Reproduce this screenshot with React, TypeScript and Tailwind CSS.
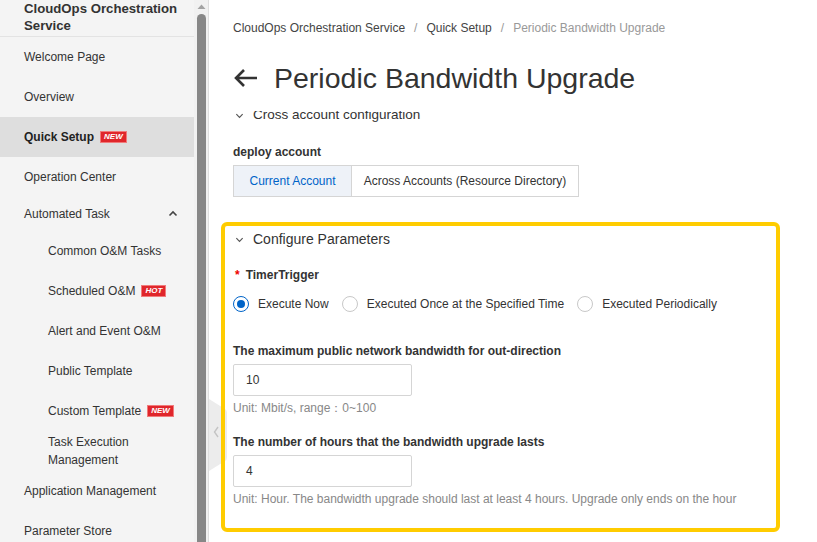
import type { FC, ReactNode } from "react";

const Badge: FC<{ children: ReactNode }> = ({ children }) => (
  <span className="ml-[6px] inline-flex h-[12px] items-center border border-[#f07b7b] bg-[#e0262b] px-[3px] text-[8px] font-bold italic leading-none text-white">
    {children}
  </span>
);

const NavItem: FC<{
  label: string;
  sub?: boolean;
  active?: boolean;
  badge?: string;
}> = ({ label, sub, active, badge }) => (
  <div
    className={`flex h-[40px] shrink-0 items-center ${sub ? "pl-[48px]" : "pl-[24px]"} pr-[12px] ${
      active ? "bg-[#dedede] font-bold text-[#222]" : "text-[#333]"
    }`}
  >
    <span>{label}</span>
    {badge && <Badge>{badge}</Badge>}
  </div>
);

const Sidebar = () => (
  <aside className="flex w-[194px] shrink-0 flex-col bg-[#f4f4f4] text-[12px]">
    <div className="shrink-0 border-b border-[#e3e3e3] pb-[2px] pl-[24px] pr-[10px] text-[13.2px] font-bold leading-[17px] text-[#333]">
      CloudOps Orchestration Service
    </div>
    <NavItem label="Welcome Page" />
    <NavItem label="Overview" />
    <NavItem label="Quick Setup" active badge="NEW" />
    <NavItem label="Operation Center" />
    <div className="flex h-[34px] shrink-0 items-center justify-between pl-[24px] pr-[16px] text-[#333]">
      <span>Automated Task</span>
      <svg width="10" height="10" viewBox="0 0 10 10">
        <path d="M1.5 6.5 L5 3 L8.5 6.5" fill="none" stroke="#444" strokeWidth="1.6" />
      </svg>
    </div>
    <NavItem label="Common O&M Tasks" sub />
    <NavItem label="Scheduled O&M" sub badge="HOT" />
    <NavItem label="Alert and Event O&M" sub />
    <NavItem label="Public Template" sub />
    <NavItem label="Custom Template" sub badge="NEW" />
    <div className="flex h-[40px] shrink-0 flex-col justify-center pl-[48px] pr-[12px] leading-[18px] text-[#333]">
      <span>Task Execution</span>
      <span>Management</span>
    </div>
    <NavItem label="Application Management" />
    <NavItem label="Parameter Store" />
  </aside>
);

const Scrollbar = () => (
  <div className="flex w-[15px] shrink-0 flex-col items-center border-r border-[#dedede] bg-[#f1f1f1]">
    <svg width="9" height="8" viewBox="0 0 9 8" className="mt-[3px]">
      <path d="M0.5 6 L4.5 1.5 L8.5 6 Z" fill="#a3a3a3" />
    </svg>
    <div className="mt-[3px] w-[9px] flex-1 rounded-t-[5px] bg-[#878787]" />
  </div>
);

const Radio: FC<{ label: string; checked?: boolean }> = ({ label, checked }) => (
  <label className="flex items-center gap-[9px]">
    <span
      className={`flex h-[16px] w-[16px] items-center justify-center rounded-full border ${
        checked ? "border-[1.5px] border-[#0064c8]" : "border-[#c8c8c8]"
      } bg-white`}
    >
      {checked && <span className="h-[8px] w-[8px] rounded-full bg-[#0064c8]" />}
    </span>
    <span className="text-[#333]">{label}</span>
  </label>
);

const Field: FC<{ label: string; value: string; help: string; className?: string }> = ({
  label,
  value,
  help,
  className,
}) => (
  <div className={className}>
    <div className="text-[12px] font-bold leading-[18px] text-[#333]">{label}</div>
    <div className="mt-[4px] flex h-[32px] w-[179px] items-center rounded-[2px] border border-[#d5d5d5] px-[12px] text-[12px] text-[#333]">
      {value}
    </div>
    <div className="mt-[3px] text-[12px] leading-[18px] text-[#888]">{help}</div>
  </div>
);

const Chevron = () => (
  <svg width="9" height="9" viewBox="0 0 10 10" className="shrink-0">
    <path d="M1.5 3.5 L5 7 L8.5 3.5" fill="none" stroke="#555" strokeWidth="1.3" />
  </svg>
);

export default function App() {
  return (
    <div className="relative flex h-[542px] w-[817px] overflow-hidden bg-white font-['Liberation_Sans',Arial,sans-serif]">
      <Sidebar />
      <Scrollbar />

      {/* collapse handle */}
      <svg
        width="18"
        height="72"
        viewBox="0 0 18 72"
        className="absolute left-[209px] top-[399px]"
      >
        <path d="M0 0 L16 10 Q18 11 18 14 L18 58 Q18 61 16 62 L0 72 Z" fill="#ececec" />
        <path d="M9 28 L5.5 33 L9 38" fill="none" stroke="#c4c4c4" strokeWidth="1.4" />
      </svg>

      <main className="flex min-w-0 flex-1 flex-col text-[12px]">
        <header className="relative z-10 h-[111px] shrink-0 bg-white pl-[24px]">
          <div className="flex items-center gap-[9px] pt-[20px] leading-[16px] text-[#444]">
            <span>CloudOps Orchestration Service</span>
            <span className="text-[#999]">/</span>
            <span>Quick Setup</span>
            <span className="text-[#999]">/</span>
            <span className="text-[#999]">Periodic Bandwidth Upgrade</span>
          </div>
          <div className="mt-[24px] flex items-center gap-[16px] text-[#333]">
            <svg width="25" height="20" viewBox="0 0 25 20">
              <path d="M24 10 H3 M11 2 L3 10 L11 18" fill="none" stroke="#333" strokeWidth="2.6" />
            </svg>
            <h1 className="text-[28.5px] leading-[36px]">Periodic Bandwidth Upgrade</h1>
          </div>
        </header>

        <div className="relative flex-1 overflow-hidden pl-[24px]">
          <div className="-mt-[6px] flex h-[20px] items-center gap-[9px] pl-[2px] text-[13.5px] text-[#333]">
            <Chevron />
            <span>Cross account configuration</span>
          </div>

          <div className="mt-[18px] font-bold leading-[18px] text-[#333]">deploy account</div>
          <div className="mt-[4px] flex h-[32px] w-[346px]">
            <div className="flex w-[119px] items-center justify-center border border-[#d5d5d5] bg-[#eef2f8] text-[#0064c8]">
              Current Account
            </div>
            <div className="flex flex-1 items-center justify-center border border-l-0 border-[#d5d5d5] text-[#333]">
              Across Accounts (Resource Directory)
            </div>
          </div>

          <section className="relative z-10 -ml-[12px] mt-[25px] h-[310px] w-[559px] rounded-[6px] border-4 border-[#ffcc00] px-[8px] pt-[3px]">
            <div className="flex h-[20px] items-center gap-[9px] pl-[2px] text-[14px] text-[#333]">
              <Chevron />
              <span>Configure Parameters</span>
            </div>
            <div className="mt-[18px] flex items-center gap-[6px] font-bold leading-[16px] text-[#333]">
              <span className="pl-[2px] text-[#e00]">*</span>
              <span>TimerTrigger</span>
            </div>
            <div className="mt-[12px] flex items-center gap-[13px]">
              <Radio label="Execute Now" checked />
              <Radio label="Executed Once at the Specified Time" />
              <Radio label="Executed Periodically" />
            </div>
            <Field
              className="mt-[29px]"
              label="The maximum public network bandwidth for out-direction"
              value="10"
              help="Unit: Mbit/s, range：0~100"
            />
            <Field
              className="mt-[16px]"
              label="The number of hours that the bandwidth upgrade lasts"
              value="4"
              help="Unit: Hour. The bandwidth upgrade should last at least 4 hours. Upgrade only ends on the hour"
            />
          </section>
        </div>
      </main>
    </div>
  );
}
